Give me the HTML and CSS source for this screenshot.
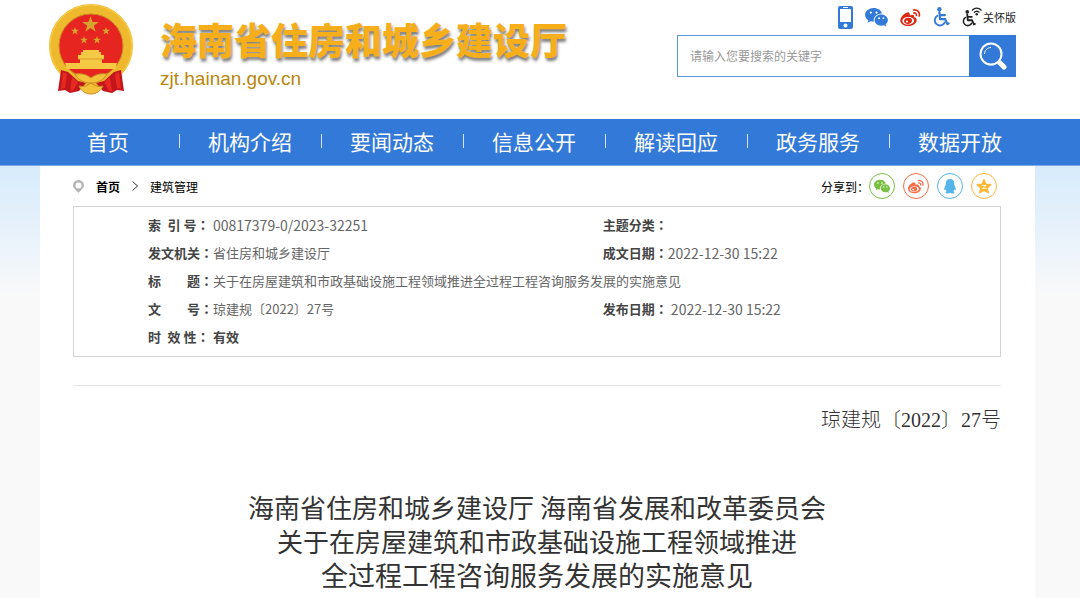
FILE: index.html
```
<!DOCTYPE html>
<html lang="zh-CN">
<head>
    <meta charset="UTF-8">
    <meta name="viewport" content="width=device-width, initial-scale=1.0">
    <title>海南省住房和城乡建设厅</title>
    <link rel="stylesheet" href="styles.css">
</head>
<body>

    <svg class="sprite" aria-hidden="true">
        <symbol id="star" viewBox="0 0 20 20">
            <path d="M10 0l2.400 7h7.400l-6 4.400 2.300 7.100-6.100-4.300-6.100 4.300 2.300-7.100-6-4.400h7.400z"/>
        </symbol>
        <symbol id="wechat" viewBox="0 0 24 20">
            <path fill-rule="evenodd" d="M9 0C4 0 0 3.200 0 7.300c0 2.400 1.300 4.400 3.400 5.700L2.500 15.600 5.700 14c1.100.3 2.200.5 3.500.5C8.100 9.600 12.300 5.700 17.700 5.800 16.900 2.400 13.300 0 9 0zM6 3.600a1.200 1.200 0 1 1 0 2.400 1.200 1.200 0 0 1 0-2.400zM12 3.600a1.200 1.200 0 1 1 0 2.400 1.200 1.200 0 0 1 0-2.400z"/>
            <path fill-rule="evenodd" d="M17 6.800c-4 0-7 2.600-7 5.900s3 5.900 7 5.900c.9 0 1.800-.2 2.700-.4l2.500 1.500-.7-2.300c1.500-1.100 2.500-2.700 2.500-4.700 0-3.300-3.200-5.900-7-5.900zM14.700 9.800a1 1 0 1 1 0 2 1 1 0 0 1 0-2zM19.300 9.800a1 1 0 1 1 0 2 1 1 0 0 1 0-2z"/>
        </symbol>
        <symbol id="weibo" viewBox="0 0 24 20">
            <path fill-rule="evenodd" d="M10 4C8.500 2.500 0 8 0 13.500 0 17.500 4.500 20 9.500 20c5.500 0 9.800-3.500 9.800-6.800 0-2-1.400-3.200-3.200-3.700.8-2.200-.8-3.500-4.800-2C11.500 6 11 5 10 4zM9.500 9.500c4 0 6.800 2 6.800 4.400S13 18.300 9.200 18.300 2.500 16.500 2.500 14s3-4.500 7-4.500z"/>
            <path fill-rule="evenodd" d="M9 10.300c-2.900.2-4.900 2-4.700 4.200.2 2.100 2.500 3.400 5.200 3.100s4.500-2.200 4.300-4.400-2.300-3.100-4.800-2.900zM7.800 13.500a1.300 1.200 0 1 1 0 2.400 1.300 1.200 0 0 1 0-2.400z"/>
            <path fill="none" stroke="currentColor" stroke-width="1.900" stroke-linecap="round" d="M15.500 1.200c4.500-1 8 2.800 6.800 7M15.800 4.700c2-.4 3.600 1.100 3.100 3"/>
        </symbol>
        <symbol id="wheelchair" viewBox="0 0 20 24">
            <circle cx="7.500" cy="2.600" r="2.600"/>
            <path fill="none" stroke="currentColor" stroke-width="2.600" stroke-linejoin="round" stroke-linecap="round" d="M7.500 6l.7 8.500h6.300l2.500 6 1.500-.7M8 9.800h6"/>
            <path fill="none" stroke="currentColor" stroke-width="2.200" stroke-linecap="round" d="M5 10.500a6.300 6.300 0 1 0 9 8"/>
        </symbol>
    </svg>

    <header class="header">
        <a class="brand" href="#">
            <svg class="emblem" viewBox="0 0 86 92" role="img" aria-label="国徽">
                <circle cx="43" cy="42" r="37" fill="#e62520" stroke="#efb92e" stroke-width="10"/>
                <circle cx="43" cy="42" r="41" fill="none" stroke="#f8d04b" stroke-width="1"/>
                <circle cx="43" cy="42" r="32" fill="none" stroke="#c98b24" stroke-width="1"/>
                <g fill="#d5a52e">
                    <use href="#star" x="34" y="12" width="17" height="17"/>
                    <use href="#star" x="23" y="23" width="8" height="8"/>
                    <use href="#star" x="54" y="23" width="8" height="8"/>
                    <use href="#star" x="32" y="32" width="8" height="8"/>
                    <use href="#star" x="45" y="32" width="8" height="8"/>
                </g>
                <path fill="#f6c944" d="M33 51v-3h2v-2h16v2h2v3h3v4h-2v4h15l-2 6H19l-2-6h15v-4h-2v-4z"/>
                <path fill="none" stroke="#d89a28" stroke-width="1" d="M30 55h26"/>
                <path fill="#c4141c" d="M13 66l7 2 10 9 8 2-7 8-9 2-5-3-7 1zM73 66l-7 2-10 9-8 2 7 8 9 2 5-3 7 1z"/>
                <path fill="#e62a22" d="M15 68l4 2-2 14-4 1zM24 73l6 5-5 9h-3zM71 68l-4 2 2 14 4 1zM62 73l-6 5 5 9h3z"/>
                <path fill="#f3c23a" stroke="#c98b24" stroke-width="1" d="M27 70c8-1 12 1 16 4 4-3 8-5 16-4-3 6-9 9-16 9s-13-3-16-9zM31 82c5 1 8 0 12-3 4 3 7 4 12 3-2 5-7 8-12 8s-10-3-12-8z"/>
            </svg>
            <span class="brand-text">
                <span class="brand-name">海南省住房和城乡建设厅</span>
                <span class="brand-url">zjt.hainan.gov.cn</span>
            </span>
        </a>

        <div class="tools">
            <div class="quick">
                <a href="#" aria-label="手机版">
                    <svg class="icon-phone" viewBox="0 0 15 23">
                        <path fill-rule="evenodd" d="M2 0h11a2 2 0 0 1 2 2v19a2 2 0 0 1-2 2H2a2 2 0 0 1-2-2V2a2 2 0 0 1 2-2zM2 3v13h11V3zM7.500 17.500a2 2 0 1 0 0 4 2 2 0 0 0 0-4z"/>
                        <path fill="#fff" d="M5 1h5v1H5z"/>
                    </svg>
                </a>
                <a href="#" aria-label="微信"><svg class="icon-wechat"><use href="#wechat"/></svg></a>
                <a class="red" href="#" aria-label="微博"><svg class="icon-weibo"><use href="#weibo"/></svg></a>
                <a href="#" aria-label="无障碍"><svg class="icon-chair"><use href="#wheelchair"/></svg></a>
                <a class="care" href="#">
                    <svg class="icon-care" viewBox="0 0 20 20">
                        <use href="#wheelchair" x="0" y="3" width="14" height="17"/>
                        <path fill="none" stroke="currentColor" stroke-width="1.300" d="M10 3.500c3-3 6.500-3 9.500 0M12 5.500c2-1.800 3.700-1.800 5.500 0"/>
                        <circle cx="14.700" cy="7.200" r="1.200"/>
                    </svg>
                    <span>关怀版</span>
                </a>
            </div>
            <form class="search" action="#">
                <input type="text" placeholder="请输入您要搜索的关键字" aria-label="搜索关键字">
                <button type="submit" aria-label="搜索">
                    <svg class="icon-search" viewBox="0 0 28 28">
                        <circle cx="12" cy="12" r="10.500" fill="none" stroke="#fff" stroke-width="2"/>
                        <path fill="none" stroke="#fff" stroke-width="1" d="M5.500 12c0-3.500 3-6.500 6.500-6.500"/>
                        <path stroke="#fff" stroke-width="5" stroke-linecap="round" d="M21 21l4 4"/>
                    </svg>
                </button>
            </form>
        </div>
    </header>

    <nav class="nav">
        <a href="#">首页</a>
        <a href="#">机构介绍</a>
        <a href="#">要闻动态</a>
        <a href="#">信息公开</a>
        <a href="#">解读回应</a>
        <a href="#">政务服务</a>
        <a href="#">数据开放</a>
    </nav>

    <div class="page">
        <main class="content">
            <div class="bar">
                <div class="crumbs">
                    <svg class="icon-pin" viewBox="0 0 11 13">
                        <path fill="#b5b5b5" fill-rule="evenodd" d="M5.500 0A5.500 5.500 0 0 1 11 5.500C11 8 7.500 10.500 5.500 13 3.500 10.500 0 8 0 5.500A5.500 5.500 0 0 1 5.500 0zM5.500 2.500a3 3 0 1 0 0 6 3 3 0 0 0 0-6z"/>
                    </svg>
                    <a class="home" href="#">首页</a>
                    <svg class="icon-arrow" viewBox="0 0 6 10"><path fill="none" stroke="#333" d="M.5.500L5.500 5l-5 4.500"/></svg>
                    <a href="#">建筑管理</a>
                </div>
                <div class="share">
                    <span>分享到：</span>
                    <div class="share-links">
                        <a class="green" href="#" aria-label="分享到微信"><svg><use href="#wechat"/></svg></a>
                        <a class="orange" href="#" aria-label="分享到微博"><svg><use href="#weibo"/></svg></a>
                        <a class="blue" href="#" aria-label="分享到QQ">
                            <svg viewBox="0 0 16 16"><path d="M8 0C5 0 3.500 2 3.500 4.500v1.700C2.500 8 1.500 9.500 2 11.500c.1.800.8.400 1.300-.4.200.9.600 1.500 1.200 2-1 .4-1.500 1-1 1.800.7.900 3.500.7 4.500-.2 1 .9 3.800 1.100 4.500.2.500-.8 0-1.400-1-1.800.6-.5 1-1.100 1.200-2 .5.800 1.200 1.200 1.300.4.500-2-.5-3.500-1.500-5.300V4.500C12.500 2 11 0 8 0z"/></svg>
                        </a>
                        <a class="yellow" href="#" aria-label="分享到QQ空间">
                            <svg viewBox="0 0 20 20">
                                <path stroke="currentColor" stroke-width="2" stroke-linejoin="round" d="M10 1l2.600 6 6.400.6-4.800 4.300 1.400 6.300L10 15l-5.600 3.200 1.400-6.300L1 7.600 7.400 7z"/>
                                <path fill="none" stroke="#fff" stroke-width="1" d="M7 8.500h6l-5 4h5.500"/>
                            </svg>
                        </a>
                    </div>
                </div>
            </div>

            <div class="info">
                <table>
                    <colgroup>
                        <col class="col-label">
                        <col>
                        <col class="col-label">
                        <col class="col-last">
                    </colgroup>
                    <tr>
                        <th scope="row">索&ensp;引&nbsp;号<span class="colon">：</span></th>
                        <td class="num">00817379-0/2023-32251</td>
                        <th scope="row">主题分类<span class="colon">：</span></th>
                        <td></td>
                    </tr>
                    <tr>
                        <th scope="row">发文机关<span class="colon">：</span></th>
                        <td>省住房和城乡建设厅</td>
                        <th scope="row">成文日期<span class="colon">：</span></th>
                        <td class="num">2022-12-30 15:22</td>
                    </tr>
                    <tr>
                        <th scope="row">标&emsp;&emsp;题<span class="colon">：</span></th>
                        <td colspan="3">关于在房屋建筑和市政基础设施工程领域推进全过程工程咨询服务发展的实施意见</td>
                    </tr>
                    <tr>
                        <th scope="row">文&emsp;&emsp;号<span class="colon">：</span></th>
                        <td>琼建规〔2022〕27号</td>
                        <th scope="row">发布日期<span class="colon">：</span></th>
                        <td class="num">&nbsp;2022-12-30 15:22</td>
                    </tr>
                    <tr>
                        <th scope="row">时&ensp;效&nbsp;性<span class="colon">：</span></th>
                        <td colspan="3"><b>有效</b></td>
                    </tr>
                </table>
            </div>

            <article class="article">
                <p class="doc-no">琼建规〔2022〕27号</p>
                <h1>
                    海南省住房和城乡建设厅 海南省发展和改革委员会<br>
                    关于在房屋建筑和市政基础设施工程领域推进
                    <span class="last">全过程工程咨询服务发展的实施意见</span>
                </h1>
            </article>
        </main>
    </div>

</body>
</html>
```

FILE: styles.css
```
* {
    margin: 0;
    padding: 0;
    box-sizing: border-box;
}
body {
    font-family: "Noto Sans CJK SC", "Liberation Sans", sans-serif;
    font-size: 13px;
    color: #555;
    background-color: #fff;
    min-height: 100vh;
    display: flex;
    flex-direction: column;
}
a {
    color: inherit;
    text-decoration: none;
}
svg {
    display: block;
    fill: currentColor;
}
.sprite {
    position: absolute;
    width: 0;
    height: 0;
}

/* header */
.header {
    display: flex;
    justify-content: space-between;
    height: 119px;
    padding: 4px 64px 0 48px;
}
.brand {
    display: flex;
    gap: 26px;
}
.emblem {
    width: 86px;
    height: 92px;
}
.brand-text {
    display: flex;
    flex-direction: column;
    gap: 3px;
    padding-top: 10px;
}
.brand-name {
    font-size: 37px;
    line-height: 50px;
    font-weight: 900;
    color: #f6ae1b;
    text-shadow: 1px 3px 3px rgba(0, 0, 0, 0.5);
}
.brand-url {
    font-family: "Liberation Sans", sans-serif;
    font-size: 19px;
    line-height: 24px;
    color: #b8860b;
}
.tools {
    width: 339px;
}
.quick {
    display: flex;
    align-items: center;
    justify-content: flex-end;
    gap: 12px;
    height: 26px;
    margin-bottom: 5px;
    color: #337ad8;
}
.icon-phone {
    width: 15px;
    height: 23px;
}
.icon-wechat {
    width: 23px;
    height: 19px;
}
.icon-weibo {
    width: 21px;
    height: 17px;
}
.icon-chair {
    width: 17px;
    height: 20px;
}
.icon-care {
    width: 20px;
    height: 20px;
}
.red {
    color: #dc2a12;
}
.care {
    display: flex;
    align-items: center;
    gap: 1px;
    font-size: 11px;
    color: #222;
}
.search {
    display: flex;
    height: 42px;
}
.search input {
    flex: 1;
    min-width: 0;
    padding: 0 12px 2px;
    border: 1px solid #5b96df;
    border-right: 0;
    font-family: inherit;
    font-size: 12px;
    outline: none;
}
.search input::placeholder {
    color: #999;
}
.search button {
    display: flex;
    align-items: center;
    justify-content: center;
    width: 47px;
    border: 0;
    background-color: #337ad8;
}
.icon-search {
    width: 28px;
    height: 28px;
}

/* main menu */
.nav {
    display: flex;
    height: 47px;
    padding: 0 49px 2px 37px;
    background-color: #337ad8;
    border-bottom: 1px solid #7eaae6;
}
.nav a {
    flex: 1;
    display: flex;
    align-items: center;
    justify-content: center;
    position: relative;
    font-size: 21px;
    color: #fff;
}
.nav a + a::before {
    content: "";
    position: absolute;
    left: 0;
    width: 1px;
    height: 14px;
    background-color: #d6e4f7;
}

.page {
    flex: 1;
    padding: 0 45px 0 40px;
    background: #f9f9f9 linear-gradient(#d7ebfb, #e9f2fb 70px, #f9f9f9 130px) no-repeat;
}
.content {
    min-height: 432px;
    padding: 0 34px 0 33px;
    background-color: #fff;
}
.bar {
    display: flex;
    align-items: center;
    justify-content: space-between;
    height: 40px;
    padding-right: 4px;
    font-size: 12px;
    color: #000;
}
.crumbs {
    display: flex;
    align-items: center;
    gap: 12px;
}
.home {
    font-weight: bold;
}
.icon-pin {
    width: 11px;
    height: 13px;
}
.icon-arrow {
    width: 6px;
    height: 10px;
}
.share {
    display: flex;
    align-items: center;
}
.share-links {
    display: flex;
    gap: 8px;
}
.share a {
    display: flex;
    align-items: center;
    justify-content: center;
    width: 26px;
    height: 26px;
    border: 1px solid currentColor;
    border-radius: 50%;
}
.share svg {
    width: 16px;
    height: 15px;
}
.green {
    color: #7ac143;
}
.orange {
    color: #f76b45;
}
.blue {
    color: #55b4e8;
}
.yellow {
    color: #fbb838;
}

/* document info */
.info {
    padding: 4px 0 5px 74px;
    border: 1px solid #d4d4d4;
}
.info table {
    width: 100%;
    table-layout: fixed;
    border-collapse: collapse;
}
.col-label {
    width: 65px;
}
.col-last {
    width: 39%;
}
.info th, .info td {
    height: 28px;
    line-height: 20px;
    text-align: left;
    white-space: nowrap;
    color: #666;
}
.info th, .info b {
    color: #444;
}
/* centred full-width colon */
.colon {
    font-family: "Noto Sans CJK TC", sans-serif;
    font-feature-settings: "locl" 0;
}
.info .num {
    font-size: 14px;
}

.article {
    margin-top: 28px;
    padding-top: 20px;
    border-top: 1px solid #e4e4e4;
}
.doc-no {
    font-family: "Liberation Serif", "Noto Sans CJK SC", serif;
    font-size: 20px;
    font-weight: 300;
    line-height: 28px;
    text-align: right;
    color: #333;
}
.article h1 {
    margin-top: 56px;
    font-size: 26px;
    font-weight: normal;
    line-height: 34px;
    text-align: center;
    color: #333;
}
.last {
    display: block;
    font-size: 27px;
}
```
